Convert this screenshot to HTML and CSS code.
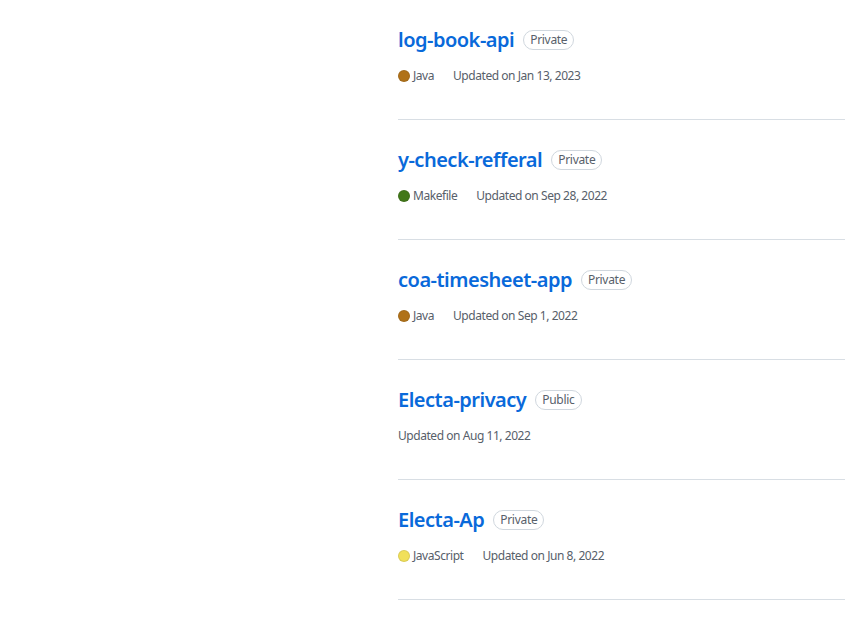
FILE: index.html
```html
<!DOCTYPE html>
<html>
<head>
<meta charset="utf-8">
<link rel="stylesheet" href="styles.css">
</head>
<body>
<ul class="repo-list">
  <li class="repo">
    <div class="repo-head"><a class="repo-name" href="#">log-book-api</a><span class="label">Private</span></div>
    <div class="meta"><span class="lang"><span class="dot java"></span>Java</span><span>Updated on Jan 13, 2023</span></div>
  </li>
  <li class="repo">
    <div class="repo-head"><a class="repo-name" href="#">y-check-refferal</a><span class="label">Private</span></div>
    <div class="meta"><span class="lang"><span class="dot makefile"></span>Makefile</span><span>Updated on Sep 28, 2022</span></div>
  </li>
  <li class="repo">
    <div class="repo-head"><a class="repo-name" href="#">coa-timesheet-app</a><span class="label">Private</span></div>
    <div class="meta"><span class="lang"><span class="dot java"></span>Java</span><span>Updated on Sep 1, 2022</span></div>
  </li>
  <li class="repo">
    <div class="repo-head"><a class="repo-name" href="#">Electa-privacy</a><span class="label">Public</span></div>
    <div class="meta"><span>Updated on Aug 11, 2022</span></div>
  </li>
  <li class="repo">
    <div class="repo-head"><a class="repo-name" href="#">Electa-Ap</a><span class="label">Private</span></div>
    <div class="meta"><span class="lang"><span class="dot js"></span>JavaScript</span><span>Updated on Jun 8, 2022</span></div>
  </li>
</ul>
</body>
</html>
```
FILE: styles.css
```css
html, body {
  margin: 0;
  padding: 0;
  background: #ffffff;
  font-family: "Noto Sans", "Segoe UI", sans-serif;
  color: #57606a;
}
.repo-list {
  list-style: none;
  margin: 0 0 0 398px;
  padding: 0;
}
.repo {
  padding: 25px 0 34px;
  border-bottom: 1px solid #d8dee4;
}
.repo-head {
  display: flex;
  align-items: center;
  height: 30px;
}
.repo-name {
  font-size: 20px;
  font-weight: 600;
  letter-spacing: -0.5px;
  color: #0969da;
  text-decoration: none;
  line-height: 30px;
}
.label {
  margin-left: 9px;
  font-size: 12px;
  font-weight: 400;
  letter-spacing: -0.3px;
  line-height: 18px;
  padding: 0 6px;
  border: 1px solid #d0d7de;
  border-radius: 2em;
  color: #57606a;
}
.meta {
  margin-top: 12px;
  display: flex;
  align-items: center;
  font-size: 12px;
  line-height: 18px;
  letter-spacing: -0.45px;
}
.lang {
  display: inline-flex;
  align-items: center;
  margin-right: 19px;
  color: #57606a;
}
.dot {
  width: 12px;
  height: 12px;
  border-radius: 50%;
  margin-right: 3px;
  border: 1px solid rgba(27,31,36,0.1);
  box-sizing: border-box;
}
.java { background: #b07219; }
.makefile { background: #427819; }
.js { background: #f1e05a; }
```
